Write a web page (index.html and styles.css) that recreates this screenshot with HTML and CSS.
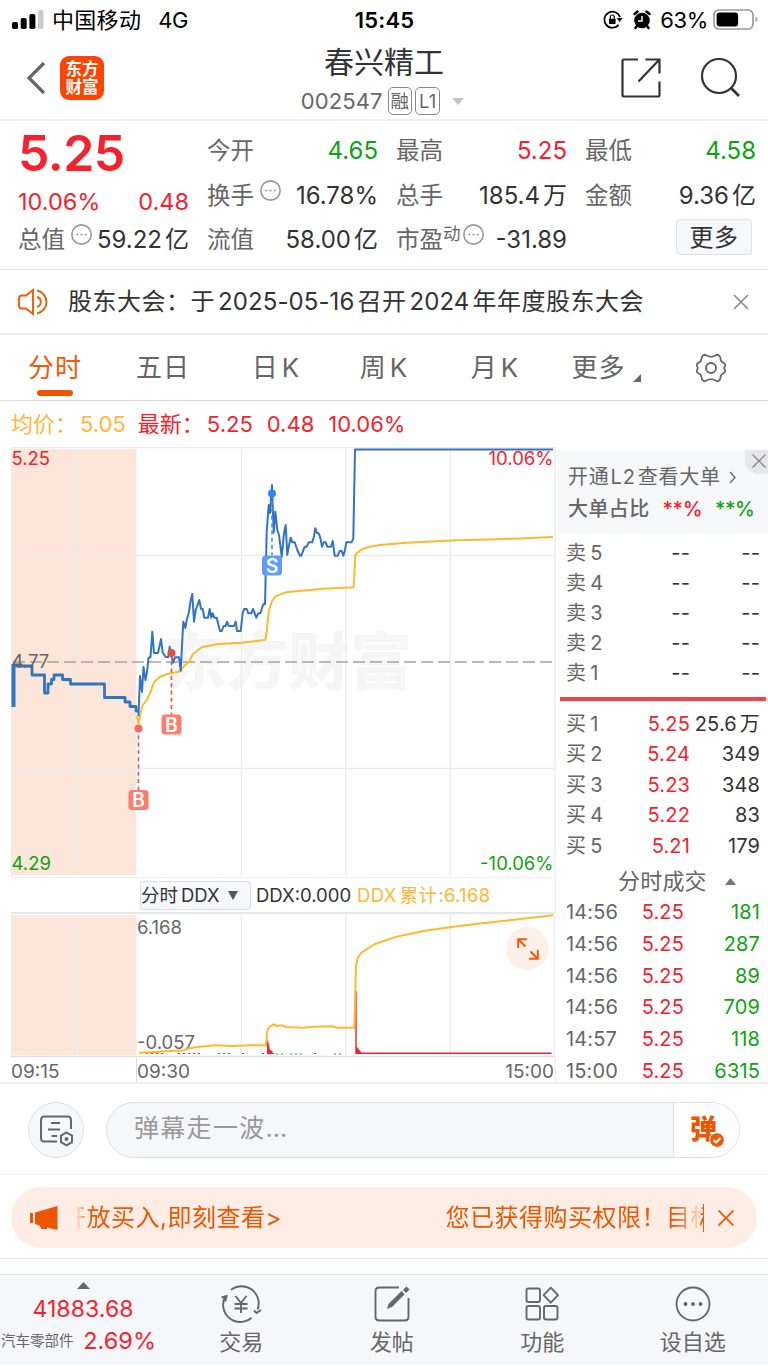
FILE: index.html
```html
<!DOCTYPE html>
<html lang="zh-CN">
<head>
<meta charset="utf-8">
<title>春兴精工 002547</title>
<link rel="stylesheet" href="styles.css">
</head>
<body>
<div class="screen">
  <div class="status">
    <div class="status-left">
      <svg width="32" height="20" viewBox="0 0 32 20"><rect x="0" y="12" width="6" height="7" rx="1.8"/><rect x="8.7" y="8" width="6" height="11" rx="1.8"/><rect x="17.4" y="4" width="6" height="15" rx="1.8"/><rect x="26" y="0" width="5.6" height="19" rx="1.8" fill="#ccc"/></svg>
      <span class="carrier">中国移动</span><span class="net">4G</span>
    </div>
    <div class="clock">15:45</div>
    <div class="status-right">
      <svg width="20" height="20" viewBox="0 0 20 20"><path d="M15.6 14.8A8 8 0 1 1 17 7.2" fill="none" stroke="#000" stroke-width="1.7"/><path d="M13.6 8h6l-3 4z"/><rect x="6" y="8.7" width="6.6" height="5.2" rx=".6"/><path d="M7.3 9V7a2 2 0 0 1 4 0v2" fill="none" stroke="#000" stroke-width="1.2"/></svg>
      <svg class="alarm" width="18" height="20" viewBox="0 0 18 20"><circle cx="9" cy="10.5" r="7.8"/><path d="M1.500 4l3-2.500M16.500 4l-3-2.500M3.500 16.500l-1 1.500M14.500 16.500l1 1.500" stroke="#000" stroke-width="2.400" stroke-linecap="round"/><path d="M9 6v5H5" fill="none" stroke="#fff" stroke-width="1.400"/></svg>
      <span class="percent">63%</span>
      <svg width="46" height="22" viewBox="0 0 46 22"><rect x="1" y="1" width="39" height="19" rx="5" fill="none" stroke="#9b9b9b" stroke-width="1.7"/><rect x="3.600" y="3.600" width="21.500" height="13.800" rx="3"/><path d="M42.500 7.500q4 3 0 6z" fill="#9b9b9b"/></svg>
    </div>
  </div>

  <header class="header">
    <div class="header-left">
      <svg width="20" height="34" viewBox="0 0 20 34"><path d="M18 2L3 17l15 15" fill="none" stroke="#666" stroke-width="3.200"/></svg>
      <div class="logo"><span>东方</span><span>财富</span></div>
    </div>
    <div class="stock">
      <div class="stock-name">春兴精工</div>
      <div class="stock-code"><span>002547</span><b class="tag rong">融</b><b class="tag">L1</b><i class="caret"></i></div>
    </div>
    <div class="header-right">
      <svg width="42" height="42" viewBox="0 0 42 42"><g fill="none" stroke="#333" stroke-width="2.200"><path d="M18 2.500H4q-1.500 0-1.500 1.500v34q0 1.500 1.500 1.500h34q1.500 0 1.500-1.500V24.500"/><path d="M25.500 2.500h14v14M39 3L18.500 24.500"/></g></svg>
      <svg width="42" height="42" viewBox="0 0 42 42"><circle cx="19" cy="19" r="17" fill="none" stroke="#333" stroke-width="2.200"/><path d="M31 31l8 8" stroke="#333" stroke-width="2.600"/></svg>
    </div>
  </header>

  <section class="quote">
    <div class="col">
      <div class="price">5.25</div>
      <div class="pair change red"><span>10.06%</span><span>0.48</span></div>
      <div class="pair"><span class="key">总值<svg class="dots" viewBox="0 0 20 20"><circle cx="10" cy="10" r="9.200"/><path d="M5 10h2m2 0h2m2 0h2"/></svg></span><span>59.22<em>亿</em></span></div>
    </div>
    <div class="col">
      <div class="pair"><span class="key">今开</span><span class="green">4.65</span></div>
      <div class="pair"><span class="key">换手<svg class="dots" viewBox="0 0 20 20"><circle cx="10" cy="10" r="9.200"/><path d="M5 10h2m2 0h2m2 0h2"/></svg></span><span>16.78%</span></div>
      <div class="pair"><span class="key">流值</span><span>58.00<em>亿</em></span></div>
    </div>
    <div class="col">
      <div class="pair"><span class="key">最高</span><span class="red">5.25</span></div>
      <div class="pair"><span class="key">总手</span><span>185.4<em>万</em></span></div>
      <div class="pair"><span class="key">市盈<small>动</small><svg class="dots near" viewBox="0 0 20 20"><circle cx="10" cy="10" r="9.200"/><path d="M5 10h2m2 0h2m2 0h2"/></svg></span><span>-31.89</span></div>
    </div>
    <div class="col">
      <div class="pair"><span class="key">最低</span><span class="green">4.58</span></div>
      <div class="pair"><span class="key">金额</span><span>9.36<em>亿</em></span></div>
      <div class="more-row"><span class="more">更多</span></div>
    </div>
  </section>

  <section class="notice">
    <svg width="32" height="28" viewBox="0 0 32 28"><g fill="none" stroke="#ee5a0c" stroke-width="1.900"><path d="M15 2v24l-7-5.500H4Q1 20.500 1 17.500v-7q0-3 3-3h4z"/><path d="M19 9a5.200 5.200 0 0 1 0 10M19 2.500a11.700 11.700 0 0 1 0 23"/></g></svg>
    <span class="notice-text">股东大会：于<i>2025-05-16</i>召开<i>2024</i>年年度股东大会</span>
    <svg width="16" height="16" viewBox="0 0 16 16"><path d="M1 1l14 14M15 1L1 15" stroke="#888" stroke-width="1.600"/></svg>
  </section>

  <nav class="tabs">
    <span class="active">分时</span><span>五日</span><span>日<i>K</i></span><span>周<i>K</i></span><span>月<i>K</i></span>
    <span>更多<svg class="corner" width="8" height="8" viewBox="0 0 8 8"><path d="M8 0v8H0z" fill="#666"/></svg></span>
    <span><svg width="32" height="30" viewBox="-16 -15 32 30"><path d="M-8-12.500Q-6-14-4.500-12.500Q0-10 4.500-12.500Q6-14 8-12.500Q9.500-11.500 9.500-9Q10-6 13-5Q15-3.500 13.800-1.500Q12.500 0 13.800 1.500Q15 3.500 13 5Q10 6 9.500 9Q9.500 11.500 8 12.500Q6 14 4.500 12.500Q0 10-4.500 12.500Q-6 14-8 12.500Q-9.500 11.500-9.500 9Q-10 6-13 5Q-15 3.500-13.800 1.500Q-12.500 0-13.800-1.500Q-15-3.500-13-5Q-10-6-9.500-9Q-9.500-11.500-8-12.500z" fill="none" stroke="#666" stroke-width="1.700"/><circle r="5" fill="none" stroke="#666" stroke-width="1.900"/></svg></span>
  </nav>

  <div class="legend"><span class="yellow">均价：<i>5.05</i></span><span class="red latest">最新：<i>5.25</i><i>0.48</i><i>10.06%</i></span></div>

  <main class="market">
    <div class="charts">
      <svg class="main-chart" width="556" height="431" viewBox="0 447 556 431">
        <rect x="12" y="449" width="124.500" height="426" fill="#fce5d9"/>
        <text class="watermark" x="165" y="685" textLength="247">东方财富</text>
        <g stroke="#e9eaf2" stroke-width="1.300"><path d="M74 449v426M241.400 449v426M345.700 449v426M450.200 449v426M12 555.700h543M12 768.500h543"/><path d="M11.500 447.500v430.300h543" fill="none"/><path d="M11 447.500h544v430" fill="none"/></g>
        <path d="M13 662h541" stroke="#a3a3a3" stroke-width="1.600" stroke-dasharray="12 5"/>
        <polyline class="avg" points="137,716 138.500,723.500 140,716 142.300,705.700 146.700,700 150.700,691.700 154,682.300 160,676.700 166.700,674.300 180.300,671.300 184,666 189.300,661.700 192.700,654.300 201.700,647.300 218.300,644 241.700,642.700 265.300,640 266.700,631.700 268.700,611.700 271.700,601.700 275,596.700 285.700,592.300 310,590 323.300,588.700 353.700,587.300 355.300,555 357.300,552.700 361.700,549.300 368.300,547 380,545 406.700,542.700 456.700,540.300 506.700,539 553,537"/>
        <path d="M13.500 707V664" stroke="#3274c4" stroke-width="4"/>
        <polyline class="pre" points="13.500,666 32,666 32,675 44.500,675 44.500,693 48,693 48,684 51.500,684 51.500,679.500 54,679.500 54,675 62.500,675 62.500,679.500 70.500,679.500 70.500,684 104.500,684 104.500,697.500 125,697.500 125,702 130,702 130,706.500 136,706.500 136,711 138,711"/>
        <polyline class="line" points="138.500,716 140,676 142,692 143.500,667 145.500,680 147,672 148.500,658 150.500,657 152.300,631.700 154,653 158,653 161,639 162.700,652.700 165.700,657 168.300,657 169.700,646.700 173,662.700 175,657.300 179,657.300 180.700,670.700 183.300,621.700 185.300,628 186.700,620 188.700,613 190.700,600 192.300,594 194,621.700 195.700,610 199.300,600 201,609 202.700,609 204.300,617.700 208,617.700 209.700,609 211.300,617.700 212.700,613.300 214.300,617.700 216.700,617.700 218.700,626 220,631 221.700,631 223.700,626 225.700,626 227,621.700 228.700,626 234,626 235.700,621.700 237,631 240.700,631 242.700,612.700 244.300,609 246.700,609 248.300,613.300 251.300,613.300 253,609 256.300,617.700 258.300,613.300 260.300,613.300 263.300,604.300 265,604.300 266.700,531.700 268.700,505 270,513 272,485 273.700,532.700 275.300,511.700 277.300,530 279,535 281.700,556.700 284,533 285.700,525 287.300,555 288.700,546.700 290.700,537.700 292.300,542.300 294.700,542.300 297.300,550 300,555.700 301.300,555.700 304.700,546.700 306.700,546.700 308.700,542.300 312,542.300 313.700,537.700 315.300,528.300 317,533.300 318.700,533.300 320.300,537.700 322,546.700 323.700,542.300 325.700,542.300 327.300,546.700 331,546.700 332.700,541 334.700,555.700 337.700,555.700 339.700,551 341.700,551 343.300,555.700 345,550 346.300,542.300 351.700,542.300 353.300,538.300 355,449.500 553,449.500"/>
        <g stroke-dasharray="4 3.300" stroke-width="1.700"><path d="M138.500 728v62M171.500 654v61" stroke="#f0554a"/><path d="M272 494v61" stroke="#4a90f5"/></g>
        <circle cx="138.500" cy="728.500" r="4" fill="#f9695a"/><circle cx="171.500" cy="653" r="4" fill="#dd504e"/><circle cx="272" cy="493.500" r="4" fill="#2f86f6"/>
        <g class="mark"><rect x="128.500" y="790" width="20" height="20" rx="3.500" fill="#ff7b6b"/><text x="138.500" y="807">B</text><rect x="161.500" y="714.500" width="20" height="20" rx="3.500" fill="#ff7b6b"/><text x="171.500" y="731.500">B</text><rect x="262" y="555.500" width="20" height="20" rx="3.500" fill="#5c9dff"/><text x="272" y="572.500">S</text></g>
        <g class="label"><text x="11.500" y="465" fill="#f5222d">5.25</text><text x="11.500" y="668" fill="#666">4.77</text><text x="11.500" y="870" fill="#0fa30f">4.29</text><text x="553.500" y="465" fill="#f5222d" text-anchor="end">10.06%</text><text x="553.500" y="870" fill="#0fa30f" text-anchor="end">-10.06%</text></g>
      </svg>
      <div class="ddx-head"><span class="select">分时<i>DDX</i><svg width="10" height="9" viewBox="0 0 10 9"><path d="M0 0h10L5 9z" fill="#555"/></svg></span><span>DDX:0.000</span><span class="yellow total">DDX<em>累计</em>:6.168</span></div>
      <div class="ddx-wrap">
        <svg width="556" height="146" viewBox="0 912 556 146">
          <rect x="12" y="915" width="124.500" height="140" fill="#fce5d9"/>
          <g stroke="#e9eaf2" stroke-width="1.300" fill="none"><path d="M74 915v141M241.400 915v141M345.700 915v141M450.200 915v141M11.500 912v146M554.500 912v146"/></g>
          <path d="M11 913h544M11 1056.500h544" stroke="#dddfe4" stroke-width="1.500"/>
          <g class="label"><text x="137" y="933.500" fill="#666">6.168</text><text x="137" y="1048.500" fill="#666">-0.057</text></g>
          <path d="M267 1054v-15l1.500 4 1.500 7 2.500 1v3zM355.300 1054V991h1.400v56l2.300 2.500 2.500 3h190v1.500z" fill="#f5222d"/>
          <path d="M146 1053.500h20M178 1053.500h22M242 1053.500h2M262 1053.500h14M314 1053.500h2" stroke="#f5222d" stroke-width="1.200" stroke-dasharray="2 3"/>
          <path d="M218 1053.500h12M276 1054h10M290 1054h12M334 1054h8" stroke="#2aa52a" stroke-width="1.200" stroke-dasharray="2 3"/>
          <polyline class="avg" points="139.300,1053 153.600,1052 184,1050.300 189.300,1048.300 200,1046.700 215,1045.300 232,1046 250,1045.300 266,1045.300 267.500,1030 270,1026.700 273.600,1024.300 276.800,1026 282,1025.300 285.700,1027 303.600,1027.700 314.300,1026.700 332,1026.300 337.500,1027.700 354.300,1027.700 356,965 358,957.300 361.400,952.700 375,944 396.400,936.700 425,930.700 450,927.300 482,923.300 514,919.700 546.400,916 553,915"/>
        </svg>
        <div class="expand"><svg width="22" height="22" viewBox="0 0 22 22"><path d="M1.200 10V1.200H10M1.500 1.500L8.500 8.500M20.800 12v8.800H12M20.500 20.500l-7-7" fill="none" stroke="#ee5a0c" stroke-width="2"/></svg></div>
      </div>
      <div class="axis"><span class="t0">09:15</span><span class="t1">09:30</span><span class="t2">15:00</span></div>
    </div>

    <aside class="side">
      <div class="l2">
        <div class="l2-link">开通<i>L2</i>查看大单<svg width="7" height="13" viewBox="0 0 7 13"><path d="M1 1l5 5.500L1 12" fill="none" stroke="#666" stroke-width="1.300"/></svg></div>
        <div class="l2-ratio"><b>大单占比</b><span class="red">**%</span><span class="green">**%</span></div>
        <div class="l2-close"><svg width="14" height="14" viewBox="0 0 14 14"><path d="M.5.5l13 13M13.500.5l-13 13" stroke="#888" stroke-width="1.300"/></svg></div>
      </div>
      <div class="book sells">
        <div><span>卖<i>5</i></span><b>--</b><b>--</b></div>
        <div><span>卖<i>4</i></span><b>--</b><b>--</b></div>
        <div><span>卖<i>3</i></span><b>--</b><b>--</b></div>
        <div><span>卖<i>2</i></span><b>--</b><b>--</b></div>
        <div><span>卖<i>1</i></span><b>--</b><b>--</b></div>
      </div>
      <div class="divider"></div>
      <div class="book buys">
        <div><span>买<i>1</i></span><b class="red">5.25</b><b>25.6<em>万</em></b></div>
        <div><span>买<i>2</i></span><b class="red">5.24</b><b>349</b></div>
        <div><span>买<i>3</i></span><b class="red">5.23</b><b>348</b></div>
        <div><span>买<i>4</i></span><b class="red">5.22</b><b>83</b></div>
        <div><span>买<i>5</i></span><b class="red">5.21</b><b>179</b></div>
      </div>
      <div class="trades-title">分时成交<svg width="11" height="7" viewBox="0 0 11 7"><path d="M0 7h11L5.500 0z" fill="#777"/></svg></div>
      <div class="book trades">
        <div><span>14:56</span><b class="red">5.25</b><b class="green">181</b></div>
        <div><span>14:56</span><b class="red">5.25</b><b class="green">287</b></div>
        <div><span>14:56</span><b class="red">5.25</b><b class="green">89</b></div>
        <div><span>14:56</span><b class="red">5.25</b><b class="green">709</b></div>
        <div><span>14:57</span><b class="red">5.25</b><b class="green">118</b></div>
        <div><span>15:00</span><b class="red">5.25</b><b class="green">6315</b></div>
      </div>
    </aside>
  </main>

  <section class="danmu">
    <div class="danmu-set"><svg width="36" height="34" viewBox="0 0 36 34"><g fill="none" stroke="#666" stroke-width="2"><path d="M18 27.500H5.500Q2 27.500 2 24V6q0-3.500 3.500-3.500h23Q32 2.500 32 6v9"/><path d="M12 9h9M9 15.500h12M12.500 22H18"/><path d="M27.500 18.500l5.500 3.200v6.400l-5.500 3.200-5.500-3.200v-6.400z"/></g><circle cx="27.500" cy="25" r="2" fill="#666"/></svg></div>
    <div class="danmu-input"><span>弹幕走一波<i>...</i></span><div class="danmu-send"><b>弹</b><svg width="14" height="14" viewBox="0 0 14 14"><circle cx="7" cy="7" r="7" fill="#ee5a0c"/><path d="M3.500 7l2.500 2.500L10.500 5" fill="none" stroke="#fff" stroke-width="1.800"/></svg></div></div>
  </section>

  <section class="banner-wrap">
    <div class="banner">
      <svg width="30" height="26" viewBox="0 0 30 26"><path d="M1 8h3v10H1zM6 7.500L28.500 1v24L18 22.500v1.500h-5.500l-2-3.500L6 19z" fill="#ee5500"/></svg>
      <div class="marquee"><span>开放买入,即刻查看&gt;</span><span>您已获得购买权限！目标</span></div>
      <svg class="banner-close" width="16" height="16" viewBox="0 0 16 16"><path d="M.5.5l15 15M15.500.5l-15 15" stroke="#ee5a0c" stroke-width="1.800"/></svg>
    </div>
  </section>

  <footer class="bottom">
    <div class="index"><svg width="13" height="7" viewBox="0 0 13 7"><path d="M0 7h13L6.500 0z" fill="#666"/></svg><div class="index-value">41883.68</div><div class="index-row"><small>汽车零部件</small><span>2.69%</span></div></div>
    <div class="item"><svg width="42" height="38" viewBox="-21 -19 42 38"><g fill="none" stroke="#666" stroke-width="1.900"><path d="M-10-14.200A17.200 17.200 0 0 1 16.600 5.500M10.500 13.800A17.200 17.200 0 0 1-15.500-8"/><path d="M-19.500-6.500l5-1.500-1.200 5.500M13 6.500l2.500 2.500 4.500-3"/><path d="M-5.500-8L0-1l5.500-7M0-1v10M-6.500 0h13M-6.500 4.500h13"/></g></svg><span>交易</span></div>
    <div class="item"><svg width="38" height="38" viewBox="-19 -19 38 38"><path d="M7-16.500H-12.500q-4 0-4 4v25q0 4 4 4h25q4 0 4-4V-6" fill="none" stroke="#666" stroke-width="1.900"/><path d="M-5 5l1.500-5L9.500-13l3.200 3.200L0 3z" fill="#666"/><path d="M12.500-12.500l3.500-3.500" stroke="#666" stroke-width="4.500"/></svg><span>发帖</span></div>
    <div class="item"><svg width="38" height="38" viewBox="-19 -19 38 38"><g fill="none" stroke="#666" stroke-width="1.900"><rect x="-15.500" y="-15.500" width="13.500" height="13.500" rx="2"/><rect x="-15.500" y="2" width="13.500" height="13.500" rx="2"/><rect x="2" y="2" width="13.500" height="13.500" rx="2"/><path d="M8.800-16.300l7.200 7.500-7.200 7.500L1.600-8.800z" stroke-linejoin="round"/></g></svg><span>功能</span></div>
    <div class="item"><svg width="38" height="38" viewBox="-19 -19 38 38"><circle r="16.500" fill="none" stroke="#666" stroke-width="1.800"/><circle cx="-7.500" r="1.900" fill="#666"/><circle r="1.900" fill="#666"/><circle cx="7.500" r="1.900" fill="#666"/></svg><span>设自选</span></div>
  </footer>
</div>
</body>
</html>
```
FILE: styles.css
```css
* { box-sizing: border-box; }
body { margin: 0; background: #fff; }
i, em { font-style: normal; }
svg { display: block; flex: none; }
.screen { width: 768px; height: 1366px; overflow: hidden; background: #fff; color: #333; font-family: Inter, "Noto Sans CJK SC", sans-serif; font-size: 24px; line-height: 1; white-space: nowrap; }
.red { color: #f5222d; }
.green { color: #0fa30f; }
.yellow { color: #ffb636; }

.status { height: 40px; display: grid; grid-template-columns: 1fr 64px 1fr; align-items: center; padding: 0 9px 0 12px; color: #000; font-size: 22px; }
.status-left, .status-right { display: flex; align-items: center; }
.carrier { margin-left: 8px; font-size: 22px; letter-spacing: .3px; }
.net { margin-left: 17px; letter-spacing: -.3px; }
.clock { font-weight: 600; text-align: center; letter-spacing: .2px; position: relative; left: -1px; }
.status-right { justify-content: flex-end; }
.alarm { margin-left: 10px; }
.percent { margin: 0 5px 0 9px; letter-spacing: -.4px; }

.header { height: 81px; display: grid; grid-template-columns: 1fr 180px 1fr; padding: 0 26px; border-bottom: 2px solid #eeeeef; }
.header-left { display: flex; align-items: center; padding-bottom: 3px; }
.logo { width: 44px; height: 44px; margin-left: 14px; border-radius: 9px; background: #ff4400; color: #fff; display: flex; flex-direction: column; align-items: center; justify-content: center; font-size: 16.500px; line-height: 18px; font-weight: 700; }
.stock { display: flex; flex-direction: column; align-items: center; }
.stock-name { margin-top: 6px; font-size: 30px; line-height: 32px; }
.stock-code { display: flex; align-items: center; height: 28px; margin-top: 9px; color: #666; font-size: 22px; }
.stock-code span { letter-spacing: .1px; }
.tag { height: 28px; margin-left: 5px; padding: 0 2px; border: 1.500px solid #888; border-radius: 5px; font-size: 18.500px; line-height: 26px; font-weight: 400; }
.tag + .tag { margin-left: 3px; padding: 0 3px; }
.caret { margin-left: 12px; margin-right: 3px; border: 6px solid transparent; border-top: 7px solid #c4c4c4; border-bottom: 0; }
.header-right { display: flex; justify-content: flex-end; align-items: center; gap: 38px; padding-bottom: 3px; }

.quote { height: 149px; padding: 6px 12px 0 18px; display: grid; grid-template-columns: repeat(4, 1fr); gap: 18px; border-bottom: 1px solid #e4e4e6; }
.pair { display: flex; justify-content: space-between; height: 44.500px; line-height: 47px; letter-spacing: 0; }
.pair em { margin-left: 3px; }
.key { display: flex; color: #666; letter-spacing: 0; font-size: 23.500px; }
.key small { font-size: 17.500px; line-height: 35px; }
.dots { width: 21px; height: 21px; margin: 8px 0 0 5.500px; fill: none; stroke: #999; stroke-width: 1.500; }
.near { margin-left: 2px; }
.price { height: 52px; font-size: 50px; line-height: 52px; font-weight: 600; color: #f5222d; letter-spacing: -.5px; }
.change { height: 37px; line-height: 45px; font-size: 23.500px; }
.more-row { display: flex; justify-content: flex-end; padding: 3px 4px 0 0; }
.more { width: 76px; height: 36px; border: 1px solid #dfe0e6; border-radius: 4px; background: #f6f7fa; text-align: center; line-height: 36px; letter-spacing: .5px; }

.notice { height: 65px; display: flex; align-items: center; padding: 0 19px 0 18px; border-bottom: 2px solid #eee; }
.notice-text { flex: 1; margin-left: 18px; line-height: 40px; letter-spacing: .5px; }
.notice-text i { margin: 0 3px; letter-spacing: .1px; }

.tabs { height: 66px; display: grid; grid-template-columns: 110px 106px 120px 96px 126px 96px 114px; border-bottom: 1.500px solid #d8d8dc; color: #666; font-size: 26px; line-height: 62px; letter-spacing: 1px; }
.tabs > span { display: flex; justify-content: center; align-items: center; }
.tabs i { margin-left: 3px; }
.tabs .active { position: relative; color: #ee5a0c; }
.active::after { content: ""; position: absolute; left: 37px; bottom: 4px; width: 36px; height: 6px; border-radius: 3px; background: #ee5500; }
.corner { margin: 20px 0 0 7px; }

.legend { height: 46px; display: flex; padding-left: 11px; font-size: 22px; line-height: 47px; }
.legend i { margin-left: 3px; margin-right: 11px; }
.latest { margin-left: 1px; }

.market { height: 637px; display: grid; grid-template-columns: 556px 212px; border-bottom: 2px solid #eeeeef; }
.avg, .line, .pre { fill: none; stroke-width: 2; stroke-linejoin: round; }
.avg { stroke: #ffb92e; }
.line { stroke: #3274c4; }
.pre { stroke: #3274c4; stroke-width: 2.800; }
.watermark { font: 900 62px "Noto Sans CJK SC"; fill: #f6f6f6; }
.label { font: 18.500px Inter, sans-serif; }
.mark { font: 600 19.500px Inter, sans-serif; fill: #fff; text-anchor: middle; }
.ddx-head { height: 34px; display: flex; align-items: center; gap: 5px; padding-left: 140px; font-size: 18.500px; border-right: 1px solid #e9eaf2; }
.total { letter-spacing: .3px; margin-left: 1px; }
.select { width: 111px; height: 29px; display: flex; align-items: center; border: 1px solid #dddfe5; border-radius: 3px; background: #f6f7fa; }
.select i { margin-left: 3px; }
.select svg { margin-left: 8px; }
.ddx-head em { margin: 0 1px 0 3px; }
.ddx-wrap { position: relative; }
.expand { position: absolute; left: 506px; top: 15px; width: 43px; height: 43px; border-radius: 50%; background: #fdf0e9; display: flex; align-items: center; justify-content: center; }
.axis { height: 24px; display: grid; grid-template-columns: 125px 1fr auto; padding: 0 1px 0 11px; line-height: 27px; font-size: 19px; color: #666; border-right: 1px solid #e9eaf2; }
.t1 { height: 24px; border-left: 1px solid #d8dadf; }

.side { padding-left: 4px; }
.l2 { position: relative; height: 84px; margin: 3px 0 0 -3px; padding: 11px 0 0 11px; background: #f7f8fa; overflow: hidden; color: #666; }
.l2-link { display: flex; align-items: center; font-size: 20px; line-height: 32px; letter-spacing: .8px; }
.l2-link i { margin: 0 2px 0 1px; }
.l2-link svg { margin-left: 8px; }
.l2-ratio { display: flex; font-size: 20px; line-height: 32px; }
.l2-ratio b { margin-right: 13px; font-weight: 500; letter-spacing: .4px; }
.l2-ratio .green { margin-left: 13px; }
.l2-ratio span { font-weight: 500; letter-spacing: -.4px; }
.l2-close { position: absolute; right: 0; top: 0; width: 23px; height: 24px; padding: 4px 0 0 7px; background: #e7e7ea; border-bottom-left-radius: 14px; }
.book { padding-left: 7px; font-size: 20px; letter-spacing: .15px; }
.book > div { display: grid; grid-template-columns: 50px 73px 70px; height: 30px; line-height: 32px; }
.book span { margin-left: -1px; color: #666; }
.book span i { margin-left: 4px; }
.book b { text-align: right; font-weight: 400; }
.sells { padding-top: 3px; height: 163px; }
.divider { width: 206px; height: 4px; background: #ed4848; }
.buys { padding-top: 8px; }
.buys > div { height: 30.400px; line-height: 31px; }
.buys em { margin-left: 3px; }
.trades-title { display: flex; align-items: center; padding: 4px 0 0 58px; height: 36px; line-height: 32px; font-size: 22px; letter-spacing: .2px; color: #666; }
.trades-title svg { margin-left: 18px; margin-top: 2px; }
.trades > div { grid-template-columns: 56px 61px 76px; height: 31.800px; line-height: 31px; }

.danmu { height: 91px; display: flex; align-items: center; gap: 22px; padding: 1px 28px 0; border-bottom: 1px solid #f2f2f4; }
.danmu-set { width: 56px; height: 56px; border: 1.500px solid #dcdee4; border-radius: 50%; background: #f6f7fa; display: flex; align-items: center; justify-content: center; padding: 3px 0 0 1px; }
.danmu-input { width: 634px; height: 56px; display: flex; border: 1.500px solid #dcdee4; border-radius: 28px; background: #f6f7fa; overflow: hidden; }
.danmu-input span { flex: 1; padding-left: 27px; line-height: 51px; font-size: 25px; letter-spacing: 1.300px; color: #999; }
.danmu-input i { letter-spacing: 0; }
.danmu-send { position: relative; width: 66px; background: #fff; border-left: 1px solid #dcdee4; color: #ee5500; }
.danmu-send b { display: block; padding-left: 16px; font-size: 27px; line-height: 53px; font-weight: 900; }
.danmu-send svg { position: absolute; left: 36px; top: 30px; border-radius: 50%; box-shadow: 0 0 0 1px #fff; }

.banner-wrap { height: 84px; padding: 12px 11px; border-bottom: 1.500px solid #e9e9ec; }
.banner { height: 61px; border-radius: 31px; background: #fdede5; display: flex; align-items: center; padding: 0 22px 0 18px; }
.marquee { display: flex; justify-content: space-between; width: 629px; height: 28px; margin-left: 16px; overflow: hidden; border-right: 1.500px solid #ee5a0c; line-height: 27px; color: #ee5500; letter-spacing: .5px; -webkit-mask-image: linear-gradient(90deg, transparent, #000 16px, #000 calc(100% - 30px), rgba(0,0,0,.15) calc(100% - 5px), #000 calc(100% - 3px)); }
.marquee span:first-child { margin-left: -13px; }
.marquee span:last-child { margin-right: -12px; }
.banner-close { margin-left: 14px; }

.bottom { height: 91px; margin-top: 15px; display: grid; grid-template-columns: 166px repeat(4, 150.500px); background: #f6f7fa; border-top: 1.500px solid #dadce1; color: #666; }
.index { display: flex; flex-direction: column; align-items: center; padding-top: 7px; color: #f5222d; }
.index-value { margin-top: 3px; height: 33px; line-height: 35px; font-size: 23px; letter-spacing: .1px; }
.index-row { width: 166px; display: flex; align-items: center; justify-content: space-between; padding: 0 10px 0 1px; line-height: 32px; }
.index-row span { font-size: 23.500px; }
.index-row small { color: #666; font-size: 14.500px; }
.item { display: flex; flex-direction: column; align-items: center; padding-top: 10px; font-size: 22px; }
.item span { margin-top: 3px; line-height: 32px; }
```
